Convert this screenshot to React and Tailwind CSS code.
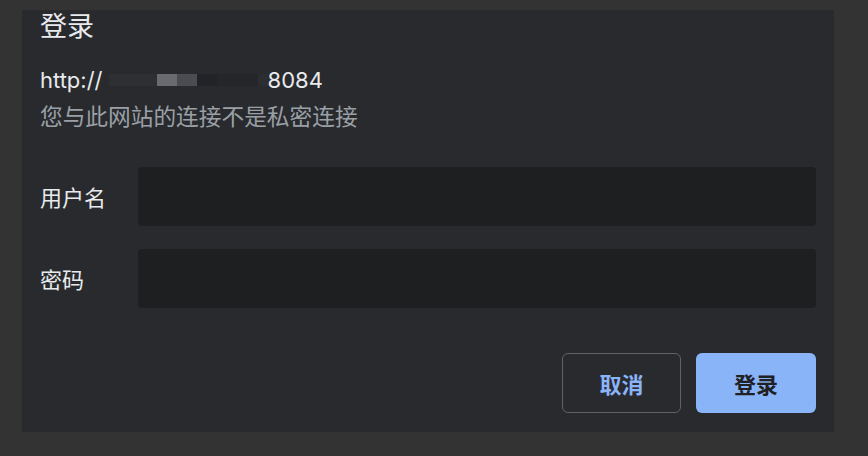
export default function App() {
  const font = { fontFamily: '"Noto Sans CJK SC", "Noto Sans", sans-serif' };
  return (
    <div className="w-[868px] h-[456px] bg-[#333333] pt-[10px] pl-[22px]" style={font}>
      <div className="w-[812px] h-[422px] bg-[#292a2e] px-[18px] flex flex-col">
        <div className="text-[27px] leading-[34px] text-[#e8eaed] -mt-[2px]">登录</div>
        <div className="mt-[24px] flex items-center h-[28px] text-[22px] leading-[28px] text-[#e8eaed]" style={{ fontFamily: '"Inter", "Noto Sans", sans-serif' }}>
          <span>http://</span>
          <span className="flex items-center ml-[6px] h-[20px]">
            <span className="w-[48px] h-[12px] bg-[#2e2f33]"></span>
            <span className="w-[20px] h-[12px] bg-[#6a6b70]"></span>
            <span className="w-[20px] h-[12px] bg-[#4b4c51]"></span>
            <span className="w-[20px] h-[12px] bg-[#222327]"></span>
            <span className="w-[41px] h-[12px] bg-[#25262a]"></span>
            <span className="w-[10px] h-[12px] bg-[#2c2d31]"></span>
          </span>
          <span>8084</span>
        </div>
        <div className="mt-[8px] text-[22.7px] leading-[28px] text-[#9aa0a6]">您与此网站的连接不是私密连接</div>
        <div className="mt-[37px] flex items-center">
          <div className="w-[98px] text-[22px] text-[#e8eaed]">用户名</div>
          <div className="flex-1 h-[59px] rounded-[4px] bg-[#1e1f21]"></div>
        </div>
        <div className="mt-[23px] flex items-center">
          <div className="w-[98px] text-[22px] text-[#e8eaed]">密码</div>
          <div className="flex-1 h-[59px] rounded-[4px] bg-[#1e1f21]"></div>
        </div>
        <div className="mt-[45px] flex justify-end gap-[15px]">
          <button className="w-[119px] h-[60px] rounded-[6px] border border-[#5f6368] text-[#8ab4f8] text-[22px] font-semibold">取消</button>
          <button className="w-[120px] h-[60px] rounded-[6px] bg-[#8ab4f8] text-[#202124] text-[22px] font-semibold">登录</button>
        </div>
      </div>
    </div>
  );
}
